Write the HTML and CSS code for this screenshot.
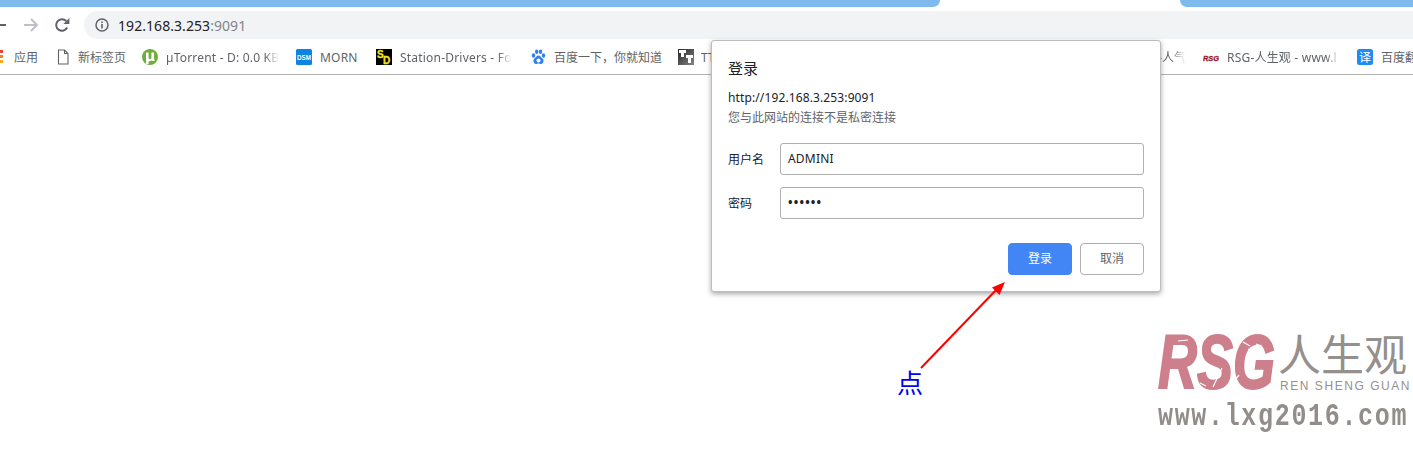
FILE: index.html
```html
<!DOCTYPE html>
<html lang="zh-CN">
<head>
<meta charset="utf-8">
<title>登录</title>
<link rel="stylesheet" href="styles.css">
</head>
<body>
<header class="chrome">
  <div class="tabstrip">
    <div class="tab-bg tab-left"></div>
    <div class="tab-active"></div>
    <div class="tab-bg tab-right"></div>
  </div>
  <div class="toolbar">
    <svg class="nav nav-back" width="6" height="16" viewBox="0 0 6 16"><path d="M0 8h6" stroke="#5f6368" stroke-width="2" fill="none"/></svg>
    <svg class="nav nav-fwd" width="16" height="16" viewBox="0 0 16 16"><path d="M1 8h13M8 2l6 6-6 6" stroke="#bdc1c6" stroke-width="2" fill="none"/></svg>
    <svg class="nav nav-reload" width="16" height="16" viewBox="0 0 16 16"><path d="M13.200 10.500A5.800 5.800 0 1 1 12.200 4" stroke="#5f6368" stroke-width="2" fill="none"/><path d="M9.400 7h6V1z" fill="#5f6368"/></svg>
    <div class="omnibox">
      <svg class="info" width="14" height="14" viewBox="0 0 14 14"><circle cx="7" cy="7" r="6" stroke="#5f6368" stroke-width="1.500" fill="none"/><path d="M6.200 6h1.600v4.500H6.200zM6.200 3.400h1.600V5H6.200z" fill="#5f6368"/></svg>
      <span class="host">192.168.3.253</span><span class="port">:9091</span>
    </div>
  </div>
  <nav class="bookmarks">
    <div class="bm bm-apps">
      <svg class="apps-icon" width="4" height="14" viewBox="0 0 4 14"><rect x="0" y="0" width="3" height="3" fill="#ea4335"/><rect x="0" y="5" width="3" height="3" fill="#f4811f"/><rect x="0" y="10" width="3" height="3" fill="#f9a825"/></svg>
      <span class="bm-text">应用</span>
    </div>
    <div class="bm bm-doc">
      <svg class="ico-doc" width="12" height="16" viewBox="0 0 12 16"><path d="M1.500 1h6l3.500 3.500V15h-9.500zM7.500 1v3.500H11" stroke="#5f6368" stroke-width="1.100" fill="#fff"/></svg>
      <span class="bm-text">新标签页</span>
    </div>
    <div class="bm bm-ut">
      <svg class="ico" width="16" height="16" viewBox="0 0 16 16"><circle cx="8" cy="8" r="8" fill="#6fae3c"/><path d="M4 3.500h2.600v5.300a1.400 1.400 0 0 0 2.800 0V3.500H12v5.300c0 1 .2 2 .8 3.200h-2.500l-.4-.8a3.800 3.800 0 0 1-3.300 1V15H4z" fill="#fff"/></svg>
      <span class="bm-text fade lat t-ut">µTorrent - D: 0.0 KB</span>
    </div>
    <div class="bm bm-dsm">
      <svg class="ico" width="16" height="16" viewBox="0 0 16 16"><rect width="16" height="16" rx="1.500" fill="#0b84e3"/><text x="8" y="10.500" text-anchor="middle" textLength="14" lengthAdjust="spacingAndGlyphs" class="dsm-label">DSM</text></svg>
      <span class="bm-text lat">MORN</span>
    </div>
    <div class="bm bm-sd">
      <svg class="ico" width="16" height="16" viewBox="0 0 16 16"><rect width="16" height="16" fill="#000"/><text x="1" y="9" class="sd-label">S</text><text x="7" y="15" class="sd-label">D</text></svg>
      <span class="bm-text fade lat t-sd">Station-Drivers - Fo</span>
    </div>
    <div class="bm bm-baidu">
      <svg class="ico" width="16" height="16" viewBox="0 0 16 16" fill="#2f7ff0"><ellipse cx="2.500" cy="6.500" rx="1.700" ry="2.200"/><ellipse cx="5.700" cy="2.700" rx="1.700" ry="2.300"/><ellipse cx="9.500" cy="2.700" rx="1.700" ry="2.300"/><ellipse cx="12.500" cy="6.500" rx="1.700" ry="2.200"/><path d="M7.500 6.500c2 0 2.500 2 4 3 1.800 1.200 1.300 5.500-1.500 5.500-1 0-1.500-.5-2.500-.5s-1.500.5-2.500.5C2.200 15 1.700 10.700 3.500 9.500c1.500-1 2-3 4-3z"/><circle cx="7.500" cy="11.500" r="2" fill="#fff"/></svg>
      <span class="bm-text">百度一下，你就知道</span>
    </div>
    <div class="bm bm-tt">
      <svg class="ico" width="16" height="16" viewBox="0 0 16 16"><defs><linearGradient id="ttg" x1="0" y1="0" x2="1" y2="1"><stop offset="0" stop-color="#222"/><stop offset="1" stop-color="#888"/></linearGradient></defs><rect width="16" height="16" fill="url(#ttg)"/><path d="M1 1h7v3H6v4H3V4H1zM8 6h7v3h-2v5h-3V9H8z" fill="#fff"/></svg>
      <span class="bm-text">TT</span>
      <span class="bm-text fade t-pop">-人气</span>
    </div>
    <div class="bm bm-rsg">
      <svg class="ico" width="16" height="16" viewBox="0 0 16 16"><text x="0" y="11.500" textLength="16" lengthAdjust="spacingAndGlyphs" class="rsg-label">RSG</text></svg>
      <span class="bm-text fade lat t-rsg">RSG-人生观 - www.l</span>
    </div>
    <div class="bm bm-fy">
      <svg class="ico" width="16" height="16" viewBox="0 0 16 16"><rect width="16" height="16" rx="2.500" fill="#1c8bf2"/><text x="8" y="12.500" text-anchor="middle" class="fy-label">译</text></svg>
      <span class="bm-text">百度翻译</span>
    </div>
  </nav>
</header>

<section class="dialog">
  <h1 class="dlg-title">登录</h1>
  <p class="dlg-url">http://192.168.3.253:9091</p>
  <p class="dlg-note">您与此网站的连接不是私密连接</p>
  <div class="field">
    <span class="field-label">用户名</span>
    <div class="input">ADMINI</div>
  </div>
  <div class="field">
    <span class="field-label">密码</span>
    <div class="input input-pw">••••••</div>
  </div>
  <div class="actions">
    <div class="btn btn-primary">登录</div>
    <div class="btn btn-cancel">取消</div>
  </div>
</section>

<svg class="arrow" width="100" height="100" viewBox="0 0 100 100"><path d="M11 93L88 13" stroke="#f00" stroke-width="2" fill="none"/><path d="M95 7L82 12.500 89.500 20z" fill="#f00"/></svg>
<div class="click-note">点</div>

<div class="watermark">
  <div class="wm-top">
    <div class="wm-rsg">RSG</div>
    <svg class="wm-scratches" width="122" height="60" viewBox="0 0 122 60"><path d="M64 33L55 52M85 7l7 4M90 14l9 3M98 9l6 2M20 6l10-1M42 48l6 3M76 46l5-6" stroke="#fff" stroke-width="1.200" fill="none"/></svg>
    <div class="wm-right">
      <div class="wm-cn">人生观</div>
      <div class="wm-en">REN SHENG GUAN</div>
    </div>
  </div>
  <div class="wm-url">www.lxg2016.com</div>
</div>
</body>
</html>
```
FILE: styles.css
```css
* { box-sizing: border-box; }
html, body { margin: 0; padding: 0; }
body {
  width: 1413px;
  height: 457px;
  overflow: hidden;
  background: #fff;
  position: relative;
  font-family: "Noto Sans", "Noto Sans CJK SC", sans-serif;
}

/* browser chrome */
.chrome { display: flex; flex-direction: column; }
.tabstrip { display: flex; height: 11px; }
.tab-bg { height: 7px; background: #7ebbec; }
.tab-left { width: 940px; border-bottom-right-radius: 8px; }
.tab-active { width: 240px; }
.tab-right { flex: 1; border-bottom-left-radius: 8px; }

.toolbar { display: flex; align-items: center; height: 28px; }
.nav { flex: none; }
.nav-fwd { margin-left: 17px; }
.nav-reload { margin-left: 15px; }
.omnibox {
  flex: 1;
  height: 28px;
  margin-left: 14px;
  display: flex;
  align-items: center;
  padding-left: 11px;
  background: #f1f3f4;
  border-radius: 14px 0 0 14px;
  font-size: 14px;
  letter-spacing: .06px;
}
.info { margin-right: 9px; }
.host { color: #202124; }
.port { color: #80868b; }

.bookmarks {
  display: flex;
  align-items: center;
  height: 36px;
  padding-top: 1px;
  border-bottom: 1px solid #b4b4b4;
  font-size: 12px;
  color: #5f6368;
  overflow: hidden;
}
.bm { flex: none; display: flex; align-items: center; gap: 8px; white-space: nowrap; }
.ico { flex: none; }
.bm-text { display: block; line-height: 16px; padding-top: 1px; overflow: hidden; }
.lat { letter-spacing: .2px; }
.fade {
  -webkit-mask-image: linear-gradient(to right, #000 calc(100% - 14px), transparent);
  mask-image: linear-gradient(to right, #000 calc(100% - 14px), transparent);
}

.bm-apps { width: 57px; gap: 10px; }
.bm-doc { width: 85px; gap: 9px; }
.bm-ut { width: 154px; }
.bm-dsm { width: 80px; }
.bm-sd { width: 155px; }
.bm-baidu { width: 147px; gap: 7px; }
.bm-tt { width: 525px; gap: 7px; }
.bm-rsg { width: 154px; }
.bm-fy { width: 60px; }
.t-ut { width: 113px; }
.t-sd { width: 112px; }
.t-rsg { width: 113px; }
.t-pop { margin-left: auto; margin-right: 17px; width: 30px; text-align: right; }

.dsm-label { font: bold 7px "Liberation Sans", sans-serif; fill: #fff; }
.sd-label { font: bold 10px "Liberation Sans", sans-serif; fill: #f5e32a; stroke: #f5e32a; stroke-width: .3px; }
.rsg-label { font: italic 900 8px "Liberation Sans", sans-serif; fill: #9a1020; stroke: #9a1020; stroke-width: .3px; }
.fy-label { font: 12px "Noto Sans CJK SC", sans-serif; fill: #fff; }

/* login dialog */
.dialog {
  position: absolute;
  left: 711px;
  top: 40px;
  width: 450px;
  height: 252px;
  padding: 17px 16px 0;
  background: #fff;
  border: 1px solid #bdbdbd;
  border-radius: 3px;
  box-shadow: 0 2px 5px rgba(0, 0, 0, .35);
}
.dlg-title { margin: 0; font-size: 15px; font-weight: 400; line-height: 20px; color: #202124; }
.dlg-url { margin: 10px 0 0; font-size: 12px; line-height: 20px; color: #202124; letter-spacing: .12px; }
.dlg-note { margin: 0; font-size: 12px; line-height: 20px; color: #5f6368; }
.field { display: flex; align-items: center; height: 32px; margin-top: 12px; }
.dlg-note + .field { margin-top: 15px; }
.field-label { width: 52px; font-size: 12px; color: #202124; }
.input {
  width: 364px;
  height: 32px;
  padding: 0 7px;
  border: 1px solid #b0b0b0;
  border-radius: 3px;
  font-size: 12px;
  line-height: 30px;
  color: #202124;
  letter-spacing: .2px;
}
.input-pw { letter-spacing: 1.200px; font-weight: 700; }
.actions { display: flex; justify-content: flex-end; gap: 8px; margin-top: 24px; }
.btn {
  width: 64px;
  height: 32px;
  border-radius: 4px;
  font-size: 12px;
  line-height: 30px;
  text-align: center;
}
.btn-primary { background: #4285f4; color: #fff; border: 1px solid #4285f4; }
.btn-cancel { background: #fff; color: #5f6368; border: 1px solid #b0b0b0; }

/* annotation */
.arrow { position: absolute; left: 910px; top: 275px; }
.click-note {
  position: absolute;
  left: 897px;
  top: 365px;
  font-size: 26px;
  line-height: 36px;
  color: #0000f0;
}

/* watermark */
.watermark { position: absolute; left: 1158px; top: 322px; width: 255px; }
.wm-top { display: flex; height: 73px; position: relative; }
.wm-rsg {
  width: 122px;
  font: italic 900 76px/80px "Liberation Sans", sans-serif;
  color: #cd7f8b;
  -webkit-text-stroke: 2px #cd7f8b;
  transform: scaleX(.71);
  transform-origin: left top;
  white-space: nowrap;
}
.wm-scratches { position: absolute; left: 0; top: 13px; }
.wm-right { display: flex; flex-direction: column; color: #958f8d; padding-top: 8px; position: relative; }
.wm-cn { font: 400 43px/44px "Noto Sans CJK SC", sans-serif; white-space: nowrap; margin-left: -2px; }
.wm-en { font: 400 12px/14px "Liberation Sans", sans-serif; letter-spacing: 1.550px; white-space: nowrap; margin-top: 5px; }
.wm-url {
  font: bold 25px/32px "Liberation Mono", monospace;
  letter-spacing: 1.670px;
  color: #928c8a;
  margin-top: 6px;
  white-space: nowrap;
  transform: scaleY(1.25);
  transform-origin: left center;
}
```
